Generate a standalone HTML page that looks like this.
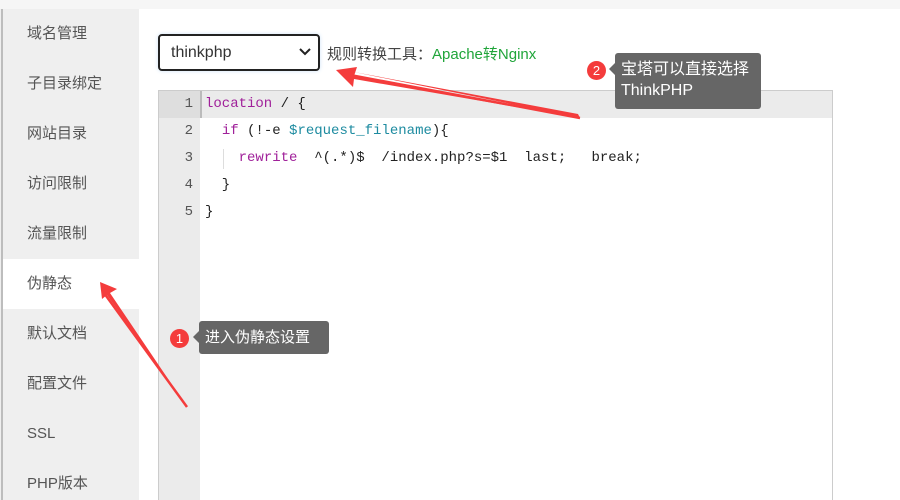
<!DOCTYPE html>
<html><head><meta charset="utf-8"><style>
*{margin:0;padding:0;box-sizing:border-box}
html,body{width:900px;height:500px;overflow:hidden}
body{background:#fff;font-family:"Liberation Sans","Noto Sans CJK SC",sans-serif;position:relative}
.top{position:absolute;left:0;top:0;width:900px;height:9px;background:#f6f6f6}
.side{position:absolute;left:0;top:9px;width:139px;height:491px;background:#efefef}
.side:before{content:"";position:absolute;left:1px;top:0;width:2px;height:491px;background:#bdbdbd}
.it{position:absolute;left:3px;width:136px;height:50px;line-height:50px;padding-left:24px;font-size:15px;color:#555}
.it.on{background:#fff}
.sel{position:absolute;left:158px;top:34px;width:162px;height:37px;border:2px solid #222;border-radius:4px;box-shadow:0 0 4px #cfe3f7;font-size:16px;line-height:33px;padding-left:11px;color:#333}
.lab{position:absolute;left:327px;top:43px;font-size:15px;color:#444}
.lab span{color:#20a53a}
.ed{position:absolute;left:158px;top:90px;width:675px;height:410px;border:1px solid #ccc;border-bottom:0;background:#fff}
.gut{position:absolute;left:0;top:0;width:41px;height:100%;background:#ebebeb}
.act{position:absolute;left:41px;top:0;right:0;height:27px;background:#ebebeb}
.agut{position:absolute;left:0;top:0;width:41px;height:27px;background:#dedede}
.ln{position:absolute;left:0;width:34px;text-align:right;font-family:"Liberation Mono",monospace;font-size:14px;color:#555;height:27px;line-height:27px}
.cd{position:absolute;left:46px;font-family:"Liberation Mono","DejaVu Sans Mono",monospace;font-size:14px;color:#222;height:27px;line-height:27px;white-space:pre}
.k{color:#a0219a}.v{color:#1d8ba0}
.tip{position:absolute;background:#666;color:#fff;border-radius:3px;font-size:16px;line-height:21px}
.tip:before{content:"";position:absolute;left:-6px;top:10px;border:6px solid transparent;border-right-color:#666;border-left:0}
.b{position:absolute;width:19px;height:19px;border-radius:50%;background:#f43c3c;color:#fff;font-size:13px;text-align:center;line-height:19px}
</style></head><body>
<div class="top"></div>
<div class="side">
<div class="it" style="top:0">域名管理</div>
<div class="it" style="top:50px">子目录绑定</div>
<div class="it" style="top:100px">网站目录</div>
<div class="it" style="top:150px">访问限制</div>
<div class="it" style="top:200px">流量限制</div>
<div class="it on" style="top:250px">伪静态</div>
<div class="it" style="top:300px">默认文档</div>
<div class="it" style="top:350px">配置文件</div>
<div class="it" style="top:400px">SSL</div>
<div class="it" style="top:450px">PHP版本</div>
</div>
<div class="sel">thinkphp<svg style="position:absolute;right:7px;top:12px" width="12" height="8" viewBox="0 0 12 8"><path d="M1 1l5 5 5-5" stroke="#222" stroke-width="2" fill="none"/></svg></div>
<div class="lab">规则转换工具：<span>Apache转Nginx</span></div>
<div class="ed">
<div class="gut"></div><div class="act"></div><div class="agut"></div>
<div style="position:absolute;left:41px;top:0;width:2px;height:27px;background:#bbb"></div>
<div class="ln" style="top:0">1</div><div class="ln" style="top:27px">2</div><div class="ln" style="top:54px">3</div><div class="ln" style="top:81px">4</div><div class="ln" style="top:108px">5</div>
<div class="cd" style="top:0"><span class="k">location</span> / {</div>
<div class="cd" style="top:27px">  <span class="k">if</span> (!-e <span class="v">$request_filename</span>){</div>
<div class="cd" style="top:54px">    <span class="k">rewrite</span>  ^(.*)$  /index.php?s=$1  last;   break;</div>
<div style="position:absolute;left:64px;top:58px;width:1px;height:20px;background:#ddd"></div>
<div class="cd" style="top:81px">  }</div>
<div class="cd" style="top:108px">}</div>
</div>
<svg style="position:absolute;left:0;top:0" width="900" height="500">
<path d="M580 118 L354 76 L357 67 L336 70 L353 87 L354 79 Z M580 118 L578 114 L354 72 Z" fill="#f43c3c"/>
<path d="M187 407 L110 293 L117 289 L100 282 L102 299 L107 295 Z" fill="#f43c3c"/>
<path d="M187 407 L104 293" stroke="#f43c3c" stroke-width="2.5"/>
<path d="M580 118 L350 75" stroke="#f43c3c" stroke-width="2.5"/>
</svg>
<div class="tip" style="left:615px;top:53px;width:146px;height:56px;padding:6px 6px">宝塔可以直接选择<br>ThinkPHP</div>
<div class="b" style="left:587px;top:61px">2</div>
<div class="tip" style="left:199px;top:321px;width:130px;height:33px;padding:6px 6px;font-size:15px">进入伪静态设置</div>
<div class="b" style="left:170px;top:329px">1</div>
</body></html>
